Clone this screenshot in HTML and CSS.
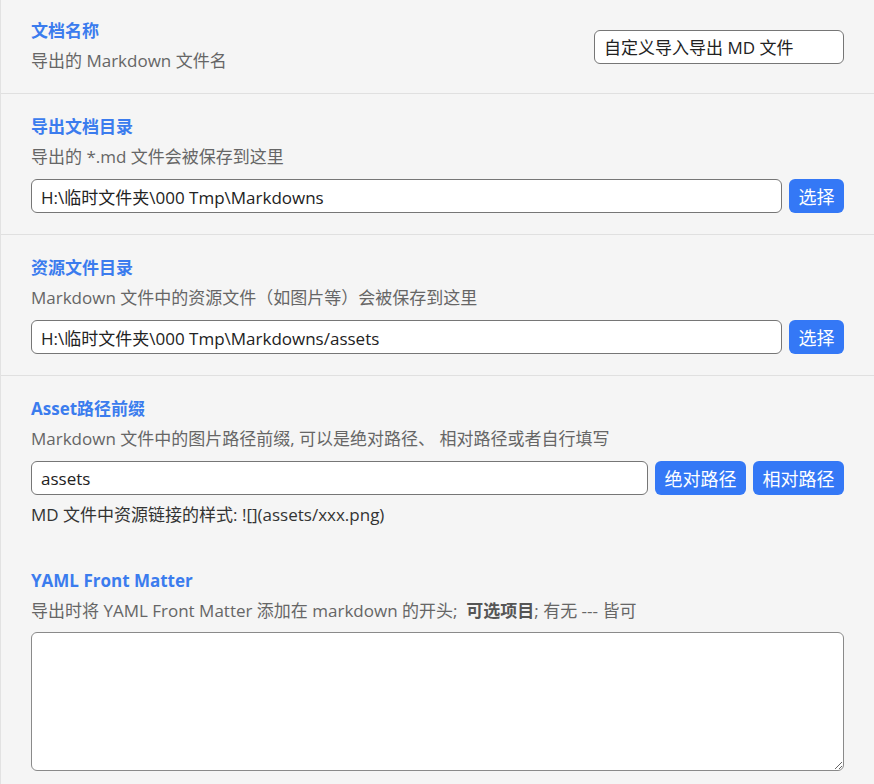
FILE: index.html
```html
<!DOCTYPE html>
<html lang="zh-CN">
<head>
<meta charset="utf-8">
<link rel="stylesheet" href="styles.css">
</head>
<body>
<div class="page">
  <section class="sec sec-first">
    <div class="sec-text">
      <div class="title">文档名称</div>
      <div class="desc">导出的 Markdown 文件名</div>
    </div>
    <input class="field field-name" type="text" value="自定义导入导出 MD 文件">
  </section>

  <section class="sec">
    <div class="title">导出文档目录</div>
    <div class="desc">导出的 *.md 文件会被保存到这里</div>
    <div class="row">
      <input class="field grow" type="text" value="H:\临时文件夹\000 Tmp\Markdowns">
      <button class="btn">选择</button>
    </div>
  </section>

  <section class="sec">
    <div class="title">资源文件目录</div>
    <div class="desc">Markdown 文件中的资源文件（如图片等）会被保存到这里</div>
    <div class="row">
      <input class="field grow" type="text" value="H:\临时文件夹\000 Tmp\Markdowns/assets">
      <button class="btn">选择</button>
    </div>
  </section>

  <section class="sec sec-noline">
    <div class="title">Asset路径前缀</div>
    <div class="desc">Markdown 文件中的图片路径前缀, 可以是绝对路径、 相对路径或者自行填写</div>
    <div class="row">
      <input class="field grow" type="text" value="assets">
      <button class="btn">绝对路径</button>
      <button class="btn">相对路径</button>
    </div>
    <div class="note">MD 文件中资源链接的样式: ![](assets/xxx.png)</div>
  </section>

  <section class="sec sec-noline">
    <div class="title">YAML Front Matter</div>
    <div class="desc">导出时将 YAML Front Matter 添加在 markdown 的开头;&nbsp; <b class="strong">可选项目</b>; 有无 --- 皆可</div>
    <textarea class="area"></textarea>
  </section>
</div>
</body>
</html>
```

FILE: styles.css
```css
html, body {
  margin: 0;
  padding: 0;
  background: #f5f5f5;
}

.page {
  min-height: 784px;
  border-left: 1px solid #e2e2e2;
  font-family: "Open Sans", "Noto Sans CJK SC", sans-serif;
  font-size: 17px;
  color: #666;
}

.sec {
  padding: 21px 30px 21px 30px;
  border-bottom: 1px solid #e0e0e0;
}

.sec-first {
  padding-top: 19px;
  padding-bottom: 20px;
  display: flex;
  align-items: center;
  justify-content: space-between;
}

.sec-noline {
  border-bottom: none;
}

.title {
  font-weight: 700;
  color: #3b7cee;
  line-height: 24px;
  height: 24px;
}

.desc {
  margin-top: 6px;
  line-height: 24px;
  height: 24px;
  color: #666;
  white-space: nowrap;
}

.strong {
  color: #555;
  font-weight: 700;
}

.row {
  display: flex;
  gap: 7px;
  margin-top: 10px;
}

.field {
  box-sizing: border-box;
  height: 34px;
  padding: 0 9px;
  border: 1px solid #767676;
  border-radius: 6px;
  background: #fff;
  font-family: "Open Sans", "Noto Sans CJK SC", sans-serif;
  font-size: 17px;
  color: #222;
  outline: none;
}

.field-name {
  width: 250px;
  margin-top: 1px;
}

.grow {
  flex: 1;
  min-width: 0;
}

.btn {
  box-sizing: border-box;
  height: 34px;
  padding: 0 9.5px;
  border: none;
  border-radius: 6px;
  background: #3478f6;
  color: #fff;
  font-family: "Noto Sans CJK SC", "Open Sans", sans-serif;
  font-size: 18px;
  line-height: 34px;
  cursor: pointer;
}

.note {
  margin-top: 8px;
  line-height: 24px;
  color: #333;
}

.area {
  display: block;
  box-sizing: border-box;
  width: 100%;
  height: 139px;
  margin-top: 9px;
  border: 1px solid #8a8a8a;
  border-radius: 6px;
  background: #fff;
  font-family: "Open Sans", "Noto Sans CJK SC", sans-serif;
  font-size: 17px;
  outline: none;
}
```
